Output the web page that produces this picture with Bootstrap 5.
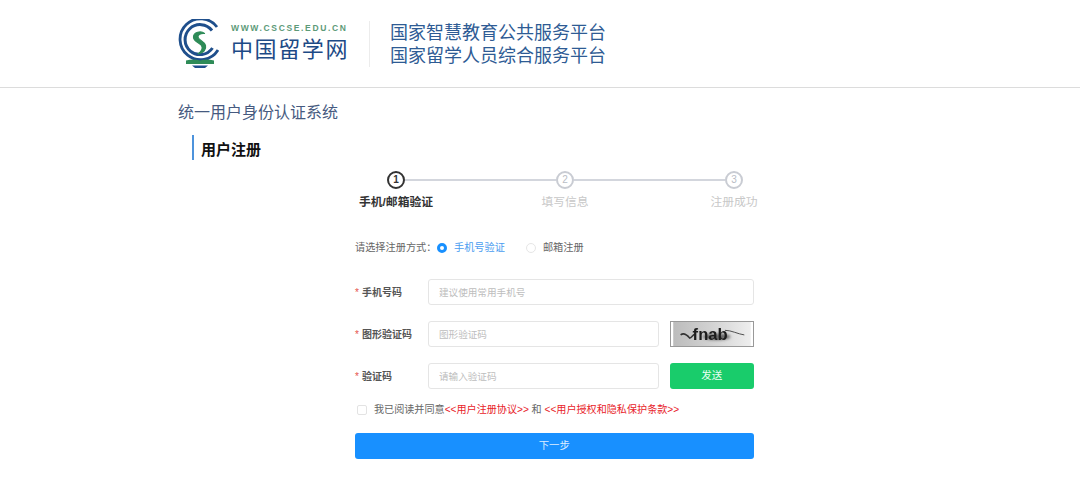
<!DOCTYPE html>
<html lang="zh-CN">
<head>
<meta charset="utf-8">
<title>用户注册</title>
<link href="https://cdn.jsdelivr.net/npm/bootstrap@5.3.0/dist/css/bootstrap.min.css" rel="stylesheet">
<style>
html,body{height:479px;overflow:hidden}
body{background:#fff;font-family:"Liberation Sans","Noto Sans CJK SC",sans-serif;color:#333;font-size:10px}
.site-head{height:88px;border-bottom:1px solid #dcdcdc}
.wrap-box{width:724px;margin:0 auto}
.site-head .wrap-box{height:87px}
.logo-side{width:191px;height:87px;flex:none}
.logo-url{font-size:8.5px;line-height:10px;letter-spacing:1.65px;color:#5d9a78;font-weight:700;margin:23px 0 0 53px;white-space:nowrap}
.logo-cn{font-size:22px;line-height:24px;letter-spacing:1.6px;color:#1d4a86;margin:2px 0 0 53px;white-space:nowrap;font-family:"Noto Sans CJK SC",sans-serif}
.logo-mark{left:0;top:19px}
.logo-rule{width:1px;height:46px;background:#ececec;margin-top:21px}
.head-title{font-size:18px;line-height:23px;color:#2e5b94;margin:22px 0 0 20px;white-space:nowrap}
.sys-title{font-size:16px;line-height:22px;color:#465a80;margin-top:14px}
.reg-title{font-size:15px;line-height:25px;font-weight:700;color:#111;border-left:2px solid #4d93dc;padding-left:7px;margin:11px 0 0 14px}
.reg-title span{position:relative;top:2px}
.step-box{width:507px;margin:11px 0 0 133.5px}
.step-line{padding:0 75.5px}
.step-dot{width:18px;height:18px;border-radius:50%;border:2px solid #c9ccd3;color:#b9bdc5;font-size:10px;line-height:14px;text-align:center;background:#fff;flex:none}
.step-dot.on{border-color:#333;color:#333;font-weight:700}
.step-bar{height:2px;background:#d3d6dd;flex:1}
.step-name{width:169px;text-align:center;font-size:11.8px;line-height:16px;color:#c8c8c8;margin-top:5px}
.step-name.on{color:#333;font-weight:700}
.form-box{width:398.5px;margin-left:177px}
.way-row{height:16px;margin-top:30px;font-size:10.2px;color:#666;white-space:nowrap}
.way-label{margin-right:3px;width:79px}
.way-dot{width:10px;height:10px;border-radius:50%;border:1px solid #e6e6e6;margin-right:7px;flex:none}
.way-dot.on{border:3px solid #1890ff;background:#fff}
.way-on{color:#4a9df0;margin-right:21px}
.way-off{color:#666}
.field-row{height:26px;margin-top:16px}
.field-row.first{margin-top:23px}
.field-label{width:73px;font-size:10px;font-weight:700;color:#555;flex:none;white-space:nowrap}
.field-label i{color:#e5534b;font-style:normal;font-weight:400;margin-right:3px}
.form-control.field-in{height:26px;min-height:26px;border:1px solid #e5e5e5;border-radius:3px;padding:0 10px;font-size:9.6px;color:#333;flex:1;width:auto;min-width:0;box-shadow:none}
.field-in::placeholder{color:#bdbdbd;opacity:1}
.side-slot{width:83.5px;height:26px;margin-left:11px;flex:none}
.cap-img{display:block;border:1px solid #999}
.btn.send-btn{background:#19cc6b;border:0;border-radius:3px;color:#e8fff2;font-size:10.5px;padding:0;width:100%;height:26px}
.agree-row{height:14px;margin-top:14px;font-size:10.1px;color:#666;white-space:nowrap}
.agree-box{width:10px;height:10px;border:1px solid #e3e3e3;border-radius:2px;margin:0 7px 0 2px;flex:none}
.agree-row a{color:#e8232a;text-decoration:none}
.btn.next-btn{display:block;background:#1890ff;border:0;border-radius:3px;color:#dcedff;font-size:10.4px;height:26px;width:100%;padding:0;margin-top:16px}
</style>
</head>
<body>
<header class="site-head">
  <div class="wrap-box d-flex">
    <div class="logo-side position-relative">
      <svg class="logo-mark position-absolute" width="46" height="50" viewBox="0 0 46 50">
        <path d="M40 31A20.500 20.500 0 1 1 39 8" fill="none" stroke="#1f4f8c" stroke-width="2.800"/>
        <path d="M34.500 29A15 15 0 1 1 34 11.500" fill="none" stroke="#1f4f8c" stroke-width="3"/>
        <path d="M26.500 14.500C23 11.500 15.500 13 15.500 18C15.500 23 21.500 23.500 23.500 26.500C25 29 23.500 32.500 20 35C25.500 34 28.500 30.500 27.500 26.500C26.500 22 20.500 21.500 20 18C19.700 16 22.500 14 26.500 14.500Z" fill="#2e8b57" stroke="#2e8b57" stroke-width="1.200" stroke-linejoin="round"/>
        <path d="M8 41.500C13 40 18 40 22 41.500C26 40 31 40 36 41.500V45H8Z" fill="#2e8b57"/>
        <path d="M14 46.500H30L27 49H17Z" fill="#1f4f8c"/>
      </svg>
      <div class="logo-url">WWW.CSCSE.EDU.CN</div>
      <div class="logo-cn">中国留学网</div>
    </div>
    <div class="logo-rule"></div>
    <div class="head-title">国家智慧教育公共服务平台<br>国家留学人员综合服务平台</div>
  </div>
</header>
<main class="wrap-box">
  <div class="sys-title">统一用户身份认证系统</div>
  <div class="reg-title"><span>用户注册</span></div>
  <div class="step-box">
    <div class="step-line d-flex align-items-center">
      <div class="step-dot on">1</div><div class="step-bar"></div>
      <div class="step-dot">2</div><div class="step-bar"></div>
      <div class="step-dot">3</div>
    </div>
    <div class="d-flex">
      <div class="step-name on">手机/邮箱验证</div>
      <div class="step-name">填写信息</div>
      <div class="step-name">注册成功</div>
    </div>
  </div>
  <form class="form-box">
    <div class="way-row d-flex align-items-center">
      <span class="way-label">请选择注册方式：</span>
      <span class="way-dot on"></span><span class="way-on">手机号验证</span>
      <span class="way-dot"></span><span class="way-off">邮箱注册</span>
    </div>
    <div class="field-row first d-flex align-items-center">
      <label class="field-label"><i>*</i>手机号码</label>
      <input class="form-control field-in" placeholder="建议使用常用手机号">
    </div>
    <div class="field-row d-flex align-items-center">
      <label class="field-label"><i>*</i>图形验证码</label>
      <input class="form-control field-in" placeholder="图形验证码">
      <div class="side-slot">
        <svg class="cap-img" width="84" height="26" viewBox="0 0 84 26">
          <defs>
            <linearGradient id="capg" x1="0" x2="1" y1="0" y2="0"><stop offset="0" stop-color="#bcbcbc"/><stop offset="0.45" stop-color="#d0d0d0"/><stop offset="1" stop-color="#eeeeee"/></linearGradient>
            <filter id="capb" x="-20%" y="-40%" width="140%" height="180%"><feGaussianBlur stdDeviation="1.500"/></filter>
            <filter id="caps" x="-10%" y="-20%" width="120%" height="140%"><feGaussianBlur stdDeviation="0.300"/></filter>
          </defs>
          <rect width="84" height="26" fill="url(#capg)"/>
          <ellipse cx="47" cy="16" rx="15" ry="3.500" fill="#666" filter="url(#capb)"/>
          <path d="M8 14C11 11.500 15 14 18 17.500C20 17 21 13.500 24 13" fill="none" stroke="#333" stroke-width="1.600" filter="url(#caps)"/>
          <path d="M56 9C63 9 70 13 77 14" fill="none" stroke="#444" stroke-width="1" filter="url(#caps)"/>
          <text x="21" y="19.500" font-family="Liberation Sans, sans-serif" font-size="18" font-weight="700" fill="#1c1c1c" filter="url(#caps)">fnab</text>
        </svg>
      </div>
    </div>
    <div class="field-row d-flex align-items-center">
      <label class="field-label"><i>*</i>验证码</label>
      <input class="form-control field-in" placeholder="请输入验证码">
      <div class="side-slot"><button type="button" class="btn send-btn">发送</button></div>
    </div>
    <div class="agree-row d-flex align-items-center">
      <span class="agree-box"></span>
      <span>我已阅读并同意<a href="#">&lt;&lt;用户注册协议&gt;&gt;</a> 和 <a href="#">&lt;&lt;用户授权和隐私保护条款&gt;&gt;</a></span>
    </div>
    <button type="button" class="btn next-btn">下一步</button>
  </form>
</main>
<script src="https://cdn.jsdelivr.net/npm/bootstrap@5.3.0/dist/js/bootstrap.bundle.min.js"></script>
</body>
</html>
